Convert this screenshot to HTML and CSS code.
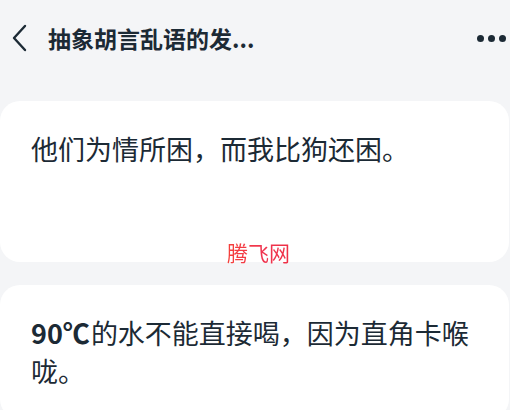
FILE: index.html
```html
<!DOCTYPE html>
<html lang="zh-CN">
<head>
<meta charset="utf-8">
<link rel="stylesheet" href="styles.css">
</head>
<body>
<div class="page">
  <header class="topbar">
    <svg class="back" width="16" height="28" viewBox="0 0 16 28">
      <path d="M14 2 L3 14 L14 26" fill="none" stroke="#1c2a35" stroke-width="2.4" stroke-linecap="round" stroke-linejoin="round"/>
    </svg>
    <h1 class="title">抽象胡言乱语的发...</h1>
    <div class="more"><span></span><span></span><span></span></div>
  </header>
  <main class="list">
    <section class="card card-first">
      <p class="joke">他们为情所困，而我比狗还困。</p>
    </section>
    <section class="card">
      <p class="joke"><b class="num">90℃</b>的水不能直接喝，因为直角卡喉咙。</p>
    </section>
  </main>
  <div class="watermark">腾飞网</div>
</div>
</body>
</html>
```

FILE: styles.css
```css
html, body {
  margin: 0;
  padding: 0;
  background: #f4f5f7;
}
.page {
  position: relative;
  width: 510px;
  height: 410px;
  overflow: hidden;
  font-family: "Noto Sans CJK SC", "Noto Sans", sans-serif;
  color: #1c2a35;
}
.topbar {
  display: flex;
  align-items: center;
  height: 76px;
  padding: 0 0 0 11px;
}
.back {
  display: block;
  margin-top: -1px;
}
.title {
  margin: 0 0 0 21px;
  font-size: 23px;
  font-weight: 700;
  line-height: 30px;
  flex: 1;
}
.more {
  display: flex;
  gap: 4px;
  margin-right: 4px;
}
.more span {
  width: 7px;
  height: 7px;
  border-radius: 50%;
  background: #1c2a35;
}
.list {
  display: flex;
  flex-direction: column;
  gap: 23px;
  padding-top: 25px;
}
.card {
  background: #ffffff;
  border-radius: 20px;
  margin-right: 1px;
  padding: 29px 31px;
}
.card-first {
  height: 103px;
}
.joke {
  margin: 0;
  font-size: 27px;
  line-height: 38px;
}
.num {
  font-weight: 700;
  margin-right: 1px;
}
.watermark {
  position: absolute;
  left: 227px;
  top: 238px;
  font-size: 21px;
  line-height: 28px;
  font-weight: 400;
  background: linear-gradient(90deg, #f5403a, #f03550 55%, #ee2f45);
  -webkit-background-clip: text;
  background-clip: text;
  color: transparent;
}
```
